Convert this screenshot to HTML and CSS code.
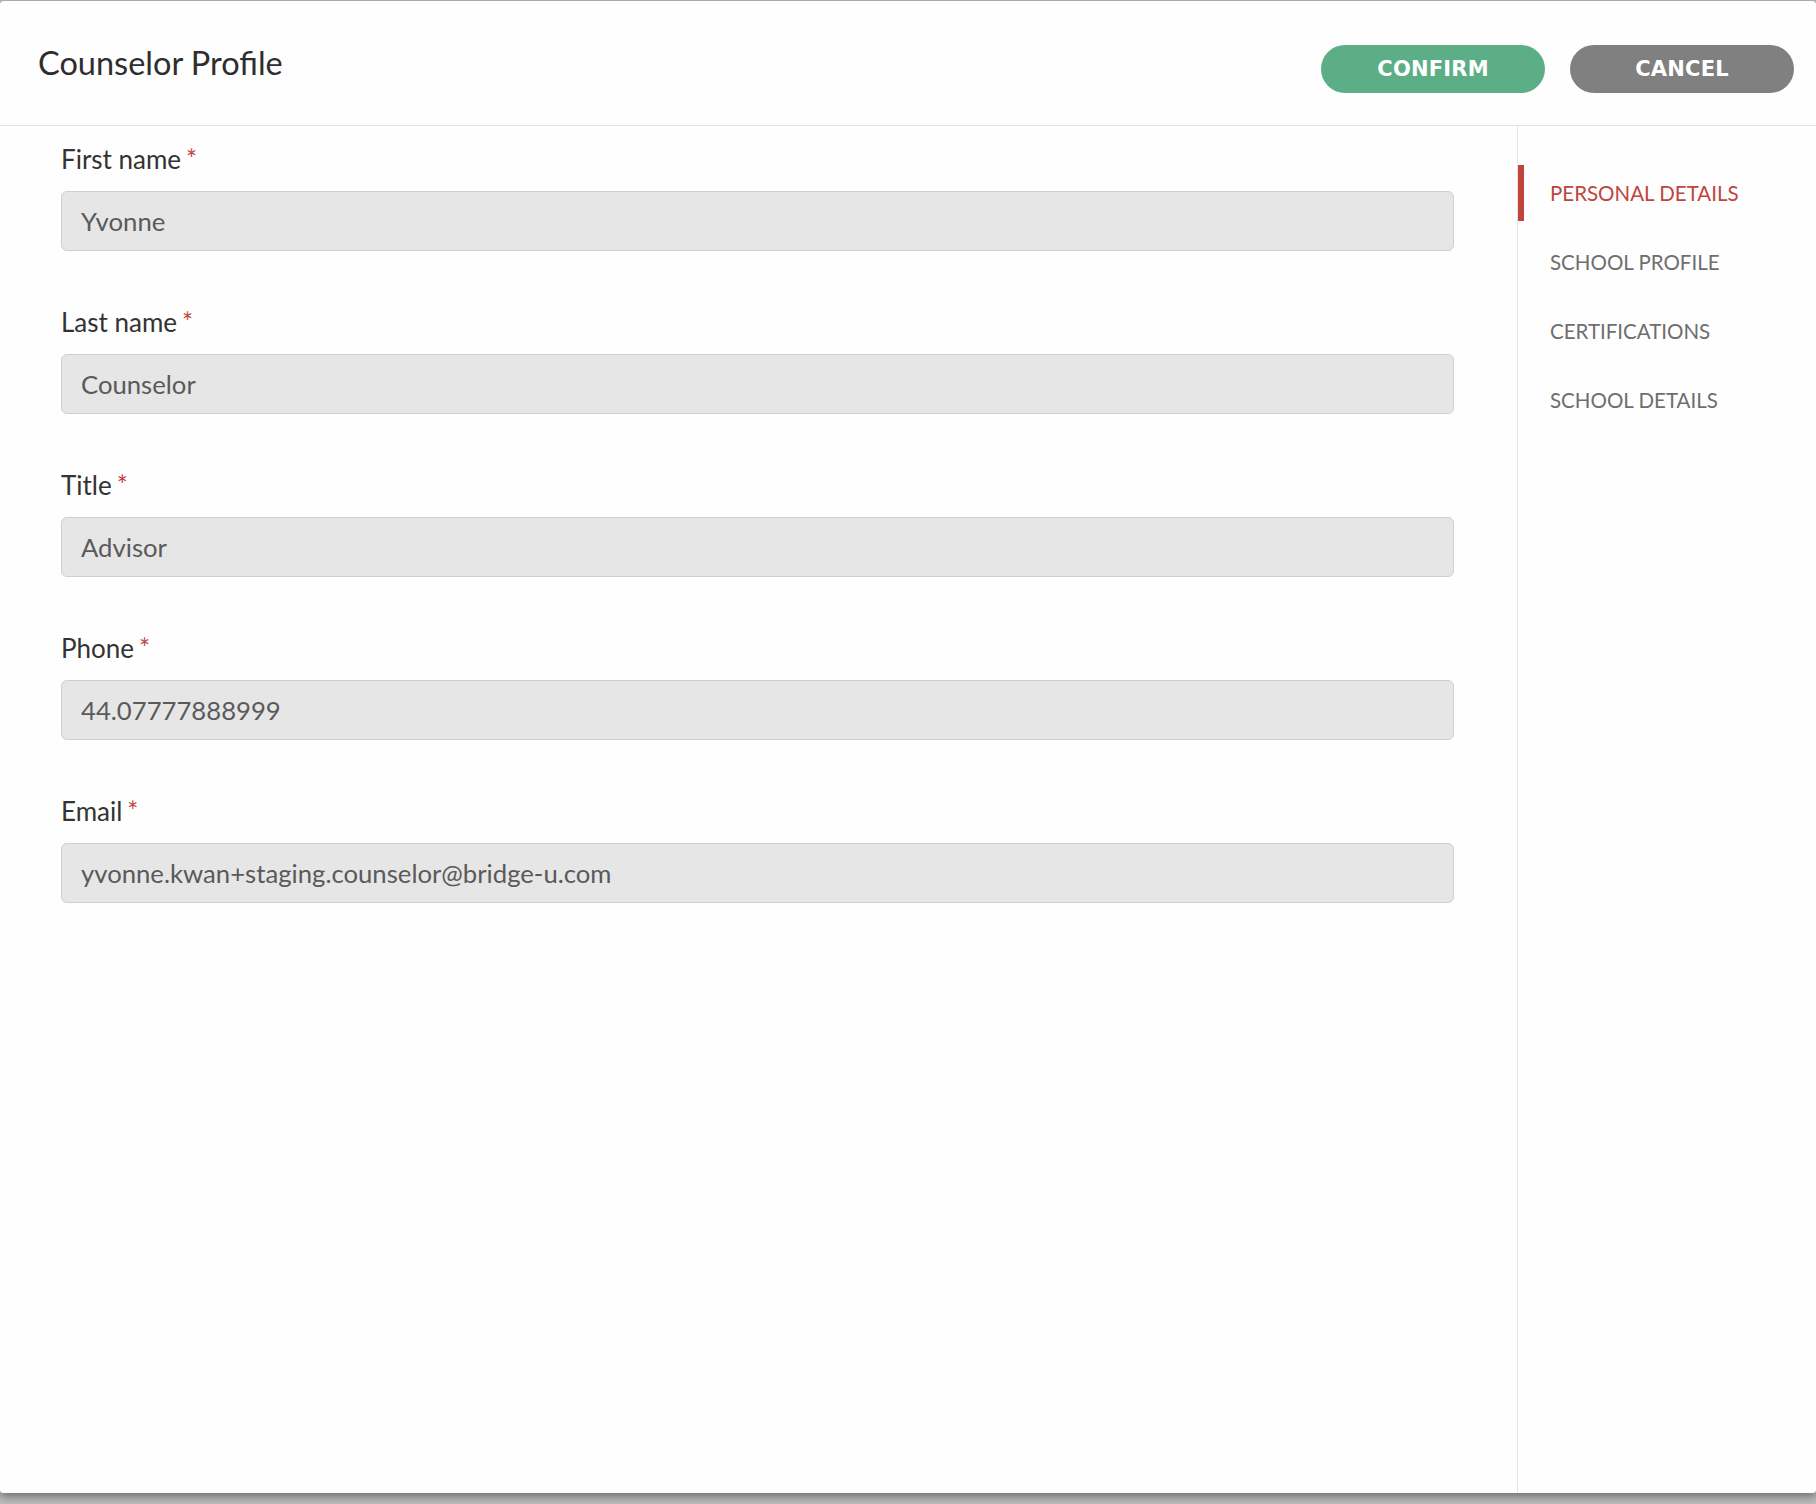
FILE: index.html
```html
<!DOCTYPE html>
<html lang="en">
<head>
<meta charset="utf-8">
<title>Counselor Profile</title>
<link rel="stylesheet" href="styles.css">
</head>
<body>
<div class="modal">
  <header class="header">
    <h1 class="title">Counselor Profile</h1>
    <div class="actions">
      <button class="btn btn-confirm">CONFIRM</button>
      <button class="btn btn-cancel">CANCEL</button>
    </div>
  </header>
  <div class="body">
    <form class="form">
      <div class="field">
        <label class="label">First name<span class="req">*</span></label>
        <input class="input" type="text" value="Yvonne" readonly>
      </div>
      <div class="field">
        <label class="label">Last name<span class="req">*</span></label>
        <input class="input" type="text" value="Counselor" readonly>
      </div>
      <div class="field">
        <label class="label">Title<span class="req">*</span></label>
        <input class="input" type="text" value="Advisor" readonly>
      </div>
      <div class="field">
        <label class="label">Phone<span class="req">*</span></label>
        <input class="input" type="text" value="44.07777888999" readonly>
      </div>
      <div class="field">
        <label class="label">Email<span class="req">*</span></label>
        <input class="input" type="text" value="yvonne.kwan+staging.counselor@bridge-u.com" readonly>
      </div>
    </form>
    <nav class="nav">
      <div class="nav-item active">PERSONAL DETAILS</div>
      <div class="nav-item">SCHOOL PROFILE</div>
      <div class="nav-item">CERTIFICATIONS</div>
      <div class="nav-item">SCHOOL DETAILS</div>
    </nav>
  </div>
</div>
</body>
</html>
```
FILE: styles.css
```css
html, body {
  margin: 0;
  padding: 0;
}
body {
  width: 1816px;
  height: 1504px;
  overflow: hidden;
  background: #bcbcbc;
  font-family: Lato, "Noto Sans", sans-serif;
}
.modal {
  margin-top: 1px;
  height: 1492px;
  background: #fefefe;
  border-radius: 4px 4px 3px 3px;
  box-shadow: 0 3px 10px rgba(0, 0, 0, 0.45);
  display: flex;
  flex-direction: column;
  box-sizing: border-box;
}
.header {
  height: 125px;
  box-sizing: border-box;
  border-bottom: 1px solid #e2e2e2;
  display: flex;
  align-items: center;
  justify-content: space-between;
  padding: 0 22px 0 38px;
  flex: none;
}
.title {
  margin: 0;
  font-size: 32.5px;
  font-weight: 400;
  color: #2e2e2e;
  line-height: 40px;
}
.actions {
  display: flex;
  gap: 25px;
  margin-top: 11px;
}
.btn {
  width: 224px;
  height: 48px;
  border: none;
  border-radius: 24px;
  color: #fff;
  font-family: "DejaVu Sans", "Open Sans", sans-serif;
  font-weight: 700;
  font-size: 21px;
  letter-spacing: 0.2px;
  padding: 0;
  cursor: pointer;
}
.btn-confirm {
  background: #5cae87;
}
.btn-cancel {
  background: #808080;
}
.body {
  flex: 1;
  display: flex;
}
.form {
  width: 1518px;
  box-sizing: border-box;
  border-right: 1px solid #e5e5e5;
  padding: 17px 63px 0 61px;
  margin: 0;
}
.field {
  display: flex;
  flex-direction: column;
  margin-bottom: 55px;
}
.label {
  font-size: 26px;
  line-height: 32px;
  color: #333;
  margin-bottom: 16px;
}
.req {
  color: #c0453d;
  font-size: 26px;
  line-height: 1;
  margin-left: 5px;
}
.input {
  height: 60px;
  box-sizing: border-box;
  border: 1px solid #cfcfcf;
  border-radius: 6px;
  background: #e6e6e6;
  padding: 0 19px;
  font-family: Lato, "Noto Sans", sans-serif;
  font-size: 25.7px;
  color: #5a5a5a;
  outline: none;
}
.nav {
  flex: 1;
  padding-top: 39px;
}
.nav-item {
  height: 56px;
  display: flex;
  align-items: center;
  border-left: 6px solid transparent;
  padding-left: 26px;
  margin-bottom: 13px;
  font-size: 20.5px;
  color: #6e6e6e;
}
.nav-item.active {
  border-left-color: #c0453d;
  color: #c0453d;
}
```
